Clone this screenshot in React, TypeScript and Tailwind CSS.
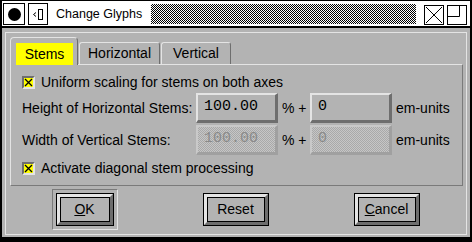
import React from "react";

const LIGHT = "border-[#e4e4e4]";

function CheckBox() {
  return (
    <svg width="13" height="13" viewBox="0 0 13 13" className="shrink-0">
      <rect x="0" y="0" width="13" height="13" fill="#e4e4e4" />
      <path d="M0 0H13L11 2H2V11L0 13Z" fill="#6e6e6e" />
      <rect x="2" y="2" width="9" height="9" fill="#ffff00" />
      <path d="M3 3L10 10M10 3L3 10" stroke="#000" strokeWidth="1.3" />
    </svg>
  );
}

function Field({ value, disabled }: { value: string; disabled?: boolean }) {
  if (disabled) {
    return (
      <div className="w-[82px] h-[30px] border-t-2 border-l-2 border-b-[3px] border-r-[3px] border-t-[#c9c9c9] border-l-[#c9c9c9] border-b-[#a0a0a0] border-r-[#a0a0a0] bg-[image:repeating-conic-gradient(#a9a9a9_0_25%,#c6c6c6_0_50%)] bg-size-[2px_2px] flex items-center pl-[6px] font-['Liberation_Mono',monospace] text-[15px] text-[#8a8a8a]">
        {value}
      </div>
    );
  }
  return (
    <div className="w-[82px] h-[30px] border-t-2 border-l-2 border-b-[3px] border-r-[3px] border-t-[#e4e4e4] border-l-[#e4e4e4] border-b-[#6e6e6e] border-r-[#6e6e6e] bg-[#b3b3b3] flex items-center pl-[6px] font-['Liberation_Mono',monospace] text-[15px] text-black">
      {value}
    </div>
  );
}

function Btn({ children, w }: { children: React.ReactNode; w: string }) {
  return (
    <div className={`${w} h-[33px] border border-black`}>
      <div className="w-full h-full border-t-[3px] border-l-[3px] border-b-[3px] border-r-[3px] border-t-[#e4e4e4] border-l-[#e4e4e4] border-b-[#6e6e6e] border-r-[#6e6e6e]">
        <div className="w-full h-full border border-black flex items-center justify-center text-[14px]">
          {children}
        </div>
      </div>
    </div>
  );
}

export default function App() {
  return (
    <div className="w-[472px] h-[242px] bg-black pt-px px-[2px] pb-[5px] flex flex-col font-['Liberation_Sans',Arial,sans-serif] text-black">
      {/* Title bar */}
      <div className="h-[25px] bg-white flex items-start pt-[2px] pl-px pr-[3px]">
        <div className="w-[22px] h-[22px] border border-black flex items-center justify-center">
          <div className="w-[13px] h-[13px] rounded-full bg-black" />
        </div>
        <div className="ml-[3px] w-[20px] h-[22px] border border-black">
          <svg width="18" height="20" viewBox="0 0 18 20">
            <path d="M7 8.5L4.5 10.5L7 12.5" stroke="#000" strokeWidth="1" fill="none" />
            <rect x="9.5" y="5.5" width="4" height="10" stroke="#000" strokeWidth="1" fill="none" />
          </svg>
        </div>
        <div className="ml-[8px] h-[22px] flex items-center text-[12.5px] leading-none">Change Glyphs</div>
        <div className="ml-[9px] mt-px flex-1 h-[20px] bg-[image:repeating-conic-gradient(#000_0_25%,#fff_0_50%)] bg-size-[2px_2px]" />
        <div className="ml-[8px] mt-[2px] w-[20px] h-[20px] border border-black">
          <svg width="18" height="18" viewBox="0 0 18 18">
            <path d="M1 1L17 17M17 1L1 17" stroke="#000" strokeWidth="1" />
          </svg>
        </div>
        <div className="ml-[3px] mt-[2px] w-[20px] h-[20px] border border-black">
          <svg width="18" height="18" viewBox="0 0 18 18">
            <path d="M0 10.5H11.5V0" stroke="#000" strokeWidth="1" fill="none" />
          </svg>
        </div>
      </div>
      <div className="h-[2px] bg-black" />

      {/* Window body */}
      <div className="flex-1 bg-[#b3b3b3] pt-[4px] pl-[3px] pr-[3px] pb-[2px] flex">
        <div className={`flex-1 border ${LIGHT} flex flex-col pt-[4px] pl-[4px] pr-[3px]`}>
          {/* Tabs */}
          <div className="flex items-end h-[27px]">
            <div className="relative z-10 -mb-px w-[68px] h-[28px] bg-[#b3b3b3] border-l border-t border-r border-l-[#e4e4e4] border-t-[#e4e4e4] border-r-[#6e6e6e] rounded-t-[4px] pt-[5px] pl-[5px] pr-[4px]">
              <div className="h-[22px] bg-[#ffff00] flex items-center justify-center text-[14px]">Stems</div>
            </div>
            <div className="ml-px w-[81px] h-[22px] border-l border-t border-r border-l-[#e4e4e4] border-t-[#e4e4e4] border-r-[#6e6e6e] rounded-t-[3px] flex items-center justify-center text-[14px]">
              Horizontal
            </div>
            <div className="ml-px w-[70px] h-[22px] border-l border-t border-r border-l-[#e4e4e4] border-t-[#e4e4e4] border-r-[#6e6e6e] rounded-t-[3px] flex items-center justify-center text-[14px]">
              Vertical
            </div>
          </div>
          {/* Panel */}
          <div className="h-[122px] border border-t-[#e4e4e4] border-l-[#e4e4e4] border-b-[#7a7a7a] border-r-[#7a7a7a] pl-[11px] pt-[10px] text-[14px]">
            <div className="h-[14px] flex items-center gap-[6px]">
              <CheckBox />
              <span>Uniform scaling for stems on both axes</span>
            </div>
            <div className="mt-[4px] flex items-center h-[30px]">
              <div className="w-[174px]">Height of Horizontal Stems:</div>
              <Field value="100.00" />
              <div className="w-[32px] pl-[4px]">% +</div>
              <Field value="0" />
              <div className="pl-[4px]">em-units</div>
            </div>
            <div className="mt-[2px] flex items-center h-[30px]">
              <div className="w-[174px]">Width of Vertical Stems:</div>
              <Field value="100.00" disabled />
              <div className="w-[32px] pl-[4px]">% +</div>
              <Field value="0" disabled />
              <div className="pl-[4px]">em-units</div>
            </div>
            <div className="mt-[6px] h-[14px] flex items-center gap-[6px]">
              <CheckBox />
              <span>Activate diagonal stem processing</span>
            </div>
          </div>
          {/* Buttons */}
          <div className="mt-[3px] grid grid-cols-3 -ml-px pr-px">
            <div className="flex justify-center">
              <div className="border border-t-[#7a7a7a] border-l-[#7a7a7a] border-b-[#e4e4e4] border-r-[#e4e4e4] p-[3px]">
                <Btn w="w-[58px]">
                  <span><span className="underline">O</span>K</span>
                </Btn>
              </div>
            </div>
            <div className="flex justify-center pt-[4px]">
              <Btn w="w-[66px]">Reset</Btn>
            </div>
            <div className="flex justify-center pt-[4px]">
              <Btn w="w-[66px]">
                <span><span className="underline">C</span>ancel</span>
              </Btn>
            </div>
          </div>
        </div>
      </div>
    </div>
  );
}
